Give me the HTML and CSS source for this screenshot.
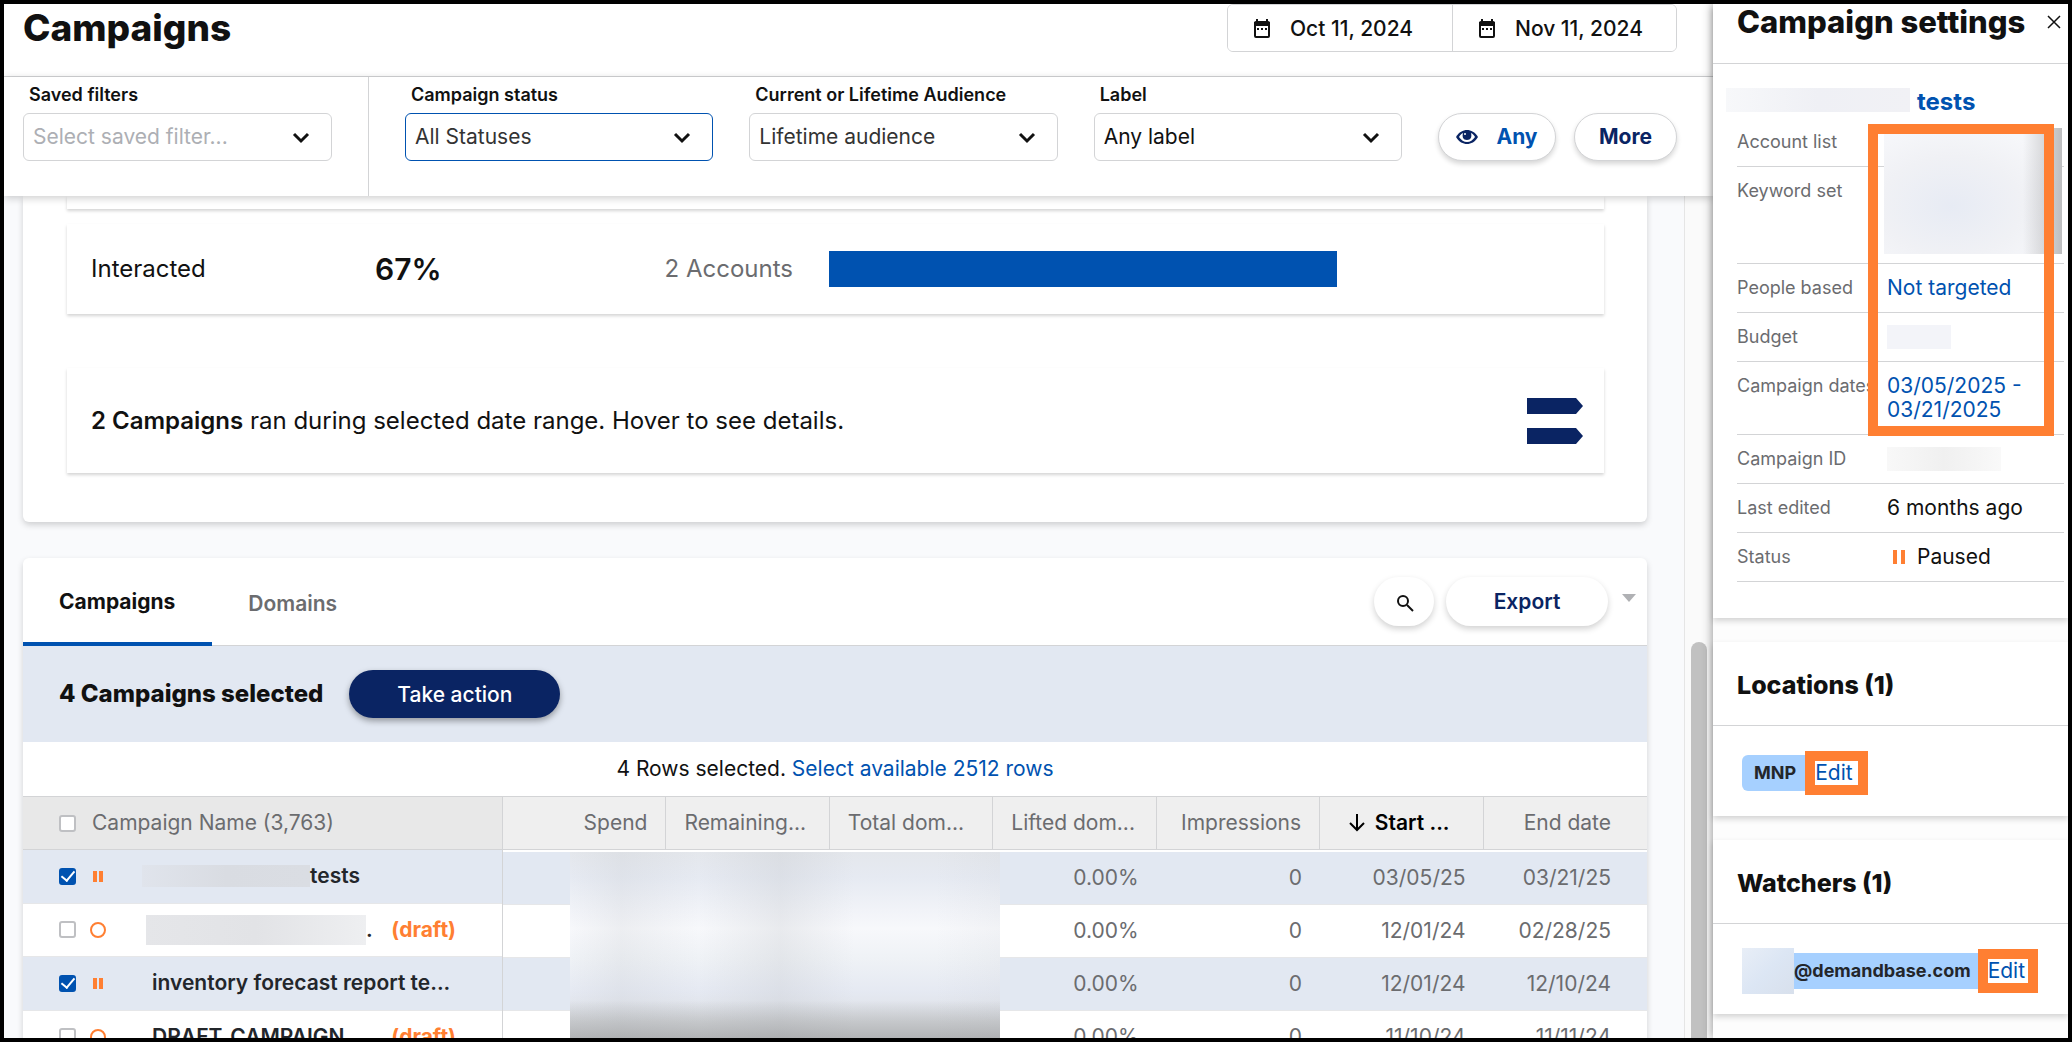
FILE: index.html
```html
<!DOCTYPE html>
<html lang="en">
<head>
    <meta charset="UTF-8">
    <meta name="viewport" content="width=device-width, initial-scale=1.0">
    <title>Campaigns</title>
    <link rel="stylesheet" href="styles.css">
</head>
<body>
    <main class="main">
        <header class="page-header">
            <h1>Campaigns</h1>
            <div class="date-range">
                <button class="date-button" type="button">
                    <svg class="calendar-icon" viewBox="0 0 18 20"><path d="M4 0v4M14 0v4" stroke="currentColor" stroke-width="2"/><rect x="2" y="3" width="14" height="15" rx="1" fill="none" stroke="currentColor" stroke-width="2"/><path d="M1 3h16v4H1z" fill="currentColor"/><path d="M4 10h2M8 10h2M12 10h2" stroke="currentColor" stroke-width="2"/></svg>
                    Oct 11, 2024
                </button>
                <button class="date-button" type="button">
                    <svg class="calendar-icon" viewBox="0 0 18 20"><path d="M4 0v4M14 0v4" stroke="currentColor" stroke-width="2"/><rect x="2" y="3" width="14" height="15" rx="1" fill="none" stroke="currentColor" stroke-width="2"/><path d="M1 3h16v4H1z" fill="currentColor"/><path d="M4 10h2M8 10h2M12 10h2" stroke="currentColor" stroke-width="2"/></svg>
                    Nov 11, 2024
                </button>
            </div>
        </header>

        <div class="filter-bar">
            <div class="saved-filters">
                <div class="field">
                    <label for="saved-filter">Saved filters</label>
                    <div class="select-box">
                        <select id="saved-filter" class="placeholder"><option>Select saved filter...</option></select>
                        <svg class="chevron" viewBox="0 0 18 12"><path d="M2 2l7 7 7-7"/></svg>
                    </div>
                </div>
            </div>
            <div class="filters">
                <div class="field">
                    <label for="status">Campaign status</label>
                    <div class="select-box">
                        <select id="status" class="active"><option>All Statuses</option></select>
                        <svg class="chevron" viewBox="0 0 18 12"><path d="M2 2l7 7 7-7"/></svg>
                    </div>
                </div>
                <div class="field">
                    <label for="audience">Current or Lifetime Audience</label>
                    <div class="select-box">
                        <select id="audience"><option>Lifetime audience</option></select>
                        <svg class="chevron" viewBox="0 0 18 12"><path d="M2 2l7 7 7-7"/></svg>
                    </div>
                </div>
                <div class="field">
                    <label for="label">Label</label>
                    <div class="select-box">
                        <select id="label" class="dark"><option>Any label</option></select>
                        <svg class="chevron" viewBox="0 0 18 12"><path d="M2 2l7 7 7-7"/></svg>
                    </div>
                </div>
                <div class="filter-buttons">
                    <button class="pill any" type="button">
                        <svg class="eye-icon" viewBox="0 0 22 14"><path d="M0 7C3 2 7 0 11 0s8 2 11 7c-3 5-7 7-11 7S3 12 0 7z" fill="#0a2463"/><path d="M3 7c1-2 2-3 4-4-1 4 0 7 4 7s5-3 4-7c2 1 3 2 4 4-2 3-5 5-8 5S5 10 3 7z" fill="#fff"/><circle cx="9" cy="4" r="1" fill="#fff"/></svg>
                        Any
                    </button>
                    <button class="pill more" type="button">More</button>
                </div>
            </div>
        </div>

        <div class="content">
            <div class="cards">
                <section class="card funnel">
                    <div class="funnel-row previous"></div>
                    <div class="funnel-row">
                        <span class="stage">Interacted</span>
                        <strong class="percent">67%</strong>
                        <span class="accounts">2 Accounts</span>
                        <div class="bar-track"><div class="bar" style="width: 66.7%"></div></div>
                    </div>
                    <div class="funnel-row summary">
                        <p><strong>2 Campaigns</strong> ran during selected date range. Hover to see details.</p>
                        <svg class="flags" viewBox="0 0 56 46"><path d="M0 0h49l7 8-7 8H0zM0 30h49l7 8-7 8H0z"/></svg>
                    </div>
                </section>

                <section class="card campaigns">
                    <div class="tabs">
                        <button class="tab selected" type="button">Campaigns</button>
                        <button class="tab" type="button">Domains</button>
                        <div class="tools">
                            <button class="round search" type="button" aria-label="Search">
                                <svg viewBox="0 0 18 18"><circle cx="7" cy="7" r="5"/><path d="M11 11l6 6"/></svg>
                            </button>
                            <button class="round export" type="button">Export</button>
                            <span class="caret"></span>
                        </div>
                    </div>
                    <div class="selection-bar">
                        <h2>4 Campaigns selected</h2>
                        <button class="take-action" type="button">Take action</button>
                    </div>
                    <p class="rows-selected">4 Rows selected. <a href="#">Select available 2512 rows</a></p>

                    <div class="grid">
                        <table class="names">
                            <thead>
                                <tr><th><div class="name-head"><input type="checkbox" id="all"><label for="all">Campaign Name (3,763)</label></div></th></tr>
                            </thead>
                            <tbody>
                                <tr class="checked">
                                    <td><div class="name-cell">
                                        <input type="checkbox" aria-label="Select tests" checked>
                                        <span class="status"><i class="pause"></i></span>
                                        <span class="name masked"><span class="mask mask-first"></span>tests</span>
                                    </div></td>
                                </tr>
                                <tr>
                                    <td><div class="name-cell">
                                        <input type="checkbox" aria-label="Select draft">
                                        <span class="status"><i class="ring"></i></span>
                                        <span class="name masked"><span class="mask mask-second"></span>.</span>
                                        <span class="draft">(draft)</span>
                                    </div></td>
                                </tr>
                                <tr class="checked">
                                    <td><div class="name-cell">
                                        <input type="checkbox" aria-label="Select inventory forecast report" checked>
                                        <span class="status"><i class="pause"></i></span>
                                        <span class="name">inventory forecast report te...</span>
                                    </div></td>
                                </tr>
                                <tr>
                                    <td><div class="name-cell">
                                        <input type="checkbox" aria-label="Select DRAFT_CAMPAIGN">
                                        <span class="status"><i class="ring"></i></span>
                                        <span class="name">DRAFT_CAMPAIGN</span>
                                        <span class="draft">(draft)</span>
                                    </div></td>
                                </tr>
                            </tbody>
                        </table>
                        <div class="metrics-pane">
                            <table class="metrics">
                                <thead>
                                    <tr>
                                        <th>Spend</th>
                                        <th class="left">Remaining...</th>
                                        <th class="left">Total dom...</th>
                                        <th class="left">Lifted dom...</th>
                                        <th>Impressions</th>
                                        <th class="sorted"><svg class="arrow" viewBox="0 0 16 18"><path d="M8 0v16M1 9l7 7 7-7"/></svg>Start ...</th>
                                        <th class="last">End date</th>
                                    </tr>
                                </thead>
                                <tbody>
                                    <tr class="checked"><td></td><td></td><td></td><td>0.00%</td><td>0</td><td>03/05/25</td><td class="last">03/21/25</td></tr>
                                    <tr><td></td><td></td><td></td><td>0.00%</td><td>0</td><td>12/01/24</td><td class="last">02/28/25</td></tr>
                                    <tr class="checked"><td></td><td></td><td></td><td>0.00%</td><td>0</td><td>12/01/24</td><td class="last">12/10/24</td></tr>
                                    <tr><td></td><td></td><td></td><td>0.00%</td><td>0</td><td>11/10/24</td><td class="last">11/11/24</td></tr>
                                </tbody>
                            </table>
                            <div class="metrics-mask"></div>
                        </div>
                    </div>
                </section>
            </div>
            <div class="scrollbar"><div class="thumb"></div></div>
        </div>
    </main>

    <aside class="panel">
        <section class="panel-section">
            <div class="panel-header">
                <h2>Campaign settings</h2>
                <button class="close" type="button" aria-label="Close"><svg viewBox="0 0 12 12"><path d="M0 0l12 12M12 0L0 12"/></svg></button>
            </div>
            <div class="campaign-title"><span class="mask mask-title"></span><a href="#">tests</a></div>
            <div class="settings-wrap">
                <dl class="settings">
                    <div><dt>Account list</dt><dd></dd></div>
                    <div class="tall"><dt>Keyword set</dt><dd></dd></div>
                    <div><dt>People based</dt><dd><a href="#">Not targeted</a></dd></div>
                    <div><dt>Budget</dt><dd><span class="mask mask-budget"></span></dd></div>
                    <div><dt>Campaign dates</dt><dd><a href="#">03/05/2025 - 03/21/2025</a></dd></div>
                    <div><dt>Campaign ID</dt><dd><span class="mask mask-id"></span></dd></div>
                    <div><dt>Last edited</dt><dd>6 months ago</dd></div>
                    <div><dt>Status</dt><dd class="paused"><i class="pause large"></i>Paused</dd></div>
                </dl>
                <div class="list-mask"></div>
                <div class="highlight-box"></div>
            </div>
        </section>
        <section class="panel-section">
            <h3>Locations (1)</h3>
            <div class="chips">
                <span class="chip">MNP</span>
                <a class="edit" href="#">Edit</a>
            </div>
        </section>
        <section class="panel-section">
            <h3>Watchers (1)</h3>
            <div class="chips">
                <span class="mask mask-watcher"></span>
                <span class="chip email">@demandbase.com</span>
                <a class="edit watcher-edit" href="#">Edit</a>
            </div>
        </section>
    </aside>
</body>
</html>
```

FILE: styles.css
```css
:root {
    --blue: #0052b0;
    --navy: #0a2463;
    --orange: #ff7f32;
    --text: #111111;
    --muted: #6b6c6f;
    --line: #d3d4d6;
    --selected: #e2e8f2;
}

* {
    margin: 0;
    padding: 0;
    box-sizing: border-box;
}

body {
    display: flex;
    height: 100vh;
    overflow: hidden;
    border: 4px solid #000;
    background: #fff;
    color: var(--text);
    font-family: Inter, "Liberation Sans", sans-serif;
    font-size: 21px;
    line-height: 24px;
}

button,
input,
select {
    font: inherit;
    color: inherit;
}

button {
    border: none;
    background: #fff;
    cursor: pointer;
}

a {
    color: var(--blue);
    text-decoration: none;
}

h1,
h2,
h3 {
    font-weight: 800;
}

.main {
    flex: 1;
    min-width: 0;
    display: flex;
    flex-direction: column;
}

/* header */
.page-header {
    display: flex;
    justify-content: space-between;
    padding: 0 36px 24px 19px;
    border-bottom: 1px solid var(--line);
}

h1 {
    font-size: 37px;
    line-height: 48px;
}

.date-range {
    display: flex;
    height: 48px;
    border: 1px solid var(--line);
    border-radius: 6px;
    overflow: hidden;
}

.date-button {
    display: flex;
    align-items: center;
    gap: 19px;
    width: 224px;
    padding: 2px 0 0 25px;
    font-weight: 500;
}

.date-button + .date-button {
    border-left: 1px solid var(--line);
}

.calendar-icon {
    width: 18px;
    height: 20px;
}

/* filters */
.filter-bar {
    display: flex;
    position: relative;
    z-index: 1;
    background: #fff;
    box-shadow: 0 2px 8px rgba(0, 0, 0, 0.2);
}

.saved-filters {
    width: 365px;
    padding: 8px 36px 35px 19px;
    border-right: 1px solid var(--line);
}

.filters {
    flex: 1;
    display: flex;
    align-items: flex-end;
    gap: 36px;
    padding: 8px 36px 35px;
}

.field {
    flex: 1;
}

.field label {
    display: block;
    margin-bottom: 8px;
    padding-left: 6px;
    font-size: 18px;
    line-height: 20px;
    font-weight: 600;
}

.select-box {
    position: relative;
}

.select-box select {
    display: block;
    width: 100%;
    height: 48px;
    padding: 0 9px;
    border: 1px solid var(--line);
    border-radius: 6px;
    background: #fff;
    color: #333;
    appearance: none;
}

.select-box select.placeholder {
    color: #adafb4;
}

.select-box select.active {
    border-color: var(--blue);
}

.select-box select.dark {
    color: var(--text);
}

.chevron {
    position: absolute;
    right: 22px;
    top: 19px;
    width: 18px;
    height: 12px;
    fill: none;
    stroke: var(--text);
    stroke-width: 3;
    pointer-events: none;
}

.filter-buttons {
    display: flex;
    gap: 18px;
}

.pill {
    display: flex;
    align-items: center;
    justify-content: center;
    height: 48px;
    border: 1px solid var(--line);
    border-radius: 24px;
    box-shadow: 0 3px 5px rgba(0, 0, 0, 0.16);
    font-weight: 700;
}

.any {
    width: 118px;
    gap: 18px;
    color: var(--blue);
}

.more {
    width: 103px;
    color: var(--navy);
}

.eye-icon {
    width: 22px;
    height: 14px;
}

/* content */
.content {
    flex: 1;
    min-height: 0;
    display: flex;
    background: #f9fafc;
}

.cards {
    flex: 1;
    min-width: 0;
    padding: 0 37px 0 19px;
    overflow: hidden;
}

.scrollbar {
    display: flex;
    flex-direction: column;
    justify-content: flex-end;
    width: 29px;
    padding-left: 6px;
    border-left: 1px solid #e5e5e5;
    background: #fafafa;
}

.thumb {
    width: 16px;
    height: 47%;
    border-radius: 8px 8px 0 0;
    background: #c1c1c1;
}

.card {
    border-radius: 6px;
    background: #fff;
    box-shadow: 0 3px 6px rgba(0, 0, 0, 0.17);
}

.funnel {
    padding: 0 43px 49px 44px;
    margin-bottom: 36px;
    border-radius: 0 0 6px 6px;
}

.funnel-row {
    display: flex;
    align-items: center;
    height: 90px;
    margin-bottom: 54px;
    padding: 0 13px 0 24px;
    box-shadow: 0 2px 3px rgba(0, 0, 0, 0.17);
    font-size: 24px;
}

.funnel-row.previous {
    height: 13px;
    margin-bottom: 15px;
}

.stage {
    width: 284px;
}

.percent {
    width: 200px;
    font-size: 30px;
    font-weight: 600;
}

.accounts {
    width: 218px;
    text-align: right;
    color: var(--muted);
}

.bar-track {
    flex: 1;
    margin-left: 36px;
}

.bar {
    height: 36px;
    background: var(--blue);
}

.summary {
    justify-content: space-between;
    height: 105px;
    margin-bottom: 0;
    padding-right: 21px;
}

.summary strong {
    font-weight: 600;
}

.flags {
    width: 56px;
    height: 46px;
    fill: var(--navy);
}

/* campaigns card */
.tabs {
    display: flex;
    height: 88px;
    border-bottom: 1px solid var(--line);
}

.tab {
    height: 88px;
    padding: 4px 37px 0 36px;
    background: none;
    color: var(--muted);
    font-weight: 600;
}

.tab.selected {
    border-bottom: 4px solid var(--blue);
    color: var(--text);
    font-weight: 700;
}

.tools {
    display: flex;
    gap: 12px;
    margin: 19px 11px 0 auto;
}

.round {
    height: 49px;
    border-radius: 25px;
    box-shadow: 0 3px 6px rgba(0, 0, 0, 0.18);
}

.search {
    width: 60px;
}

.search svg {
    width: 18px;
    height: 18px;
    margin-left: 2px;
    vertical-align: middle;
    fill: none;
    stroke: var(--text);
    stroke-width: 2;
}

.export {
    width: 162px;
    color: var(--navy);
    font-weight: 600;
}

.caret {
    height: 8px;
    margin: 17px 0 0 2px;
    border: 7px solid transparent;
    border-top: 8px solid #b0b1b4;
    border-bottom: none;
}

.selection-bar {
    display: flex;
    align-items: center;
    gap: 26px;
    height: 96px;
    padding-left: 36px;
    background: var(--selected);
}

.selection-bar h2 {
    font-size: 24px;
}

.take-action {
    width: 211px;
    height: 48px;
    padding-top: 1px;
    border-radius: 24px;
    background: var(--navy);
    box-shadow: 0 3px 6px rgba(0, 0, 0, 0.35);
    color: #fff;
    font-weight: 500;
}

.rows-selected {
    padding: 15px 0;
    text-align: center;
}

/* the name column stays put, the metric columns sit in their own pane */
.grid {
    display: flex;
    border-top: 1px solid var(--line);
    color: var(--muted);
}

table {
    border-collapse: separate;
    border-spacing: 0;
    table-layout: fixed;
}

th,
td {
    height: 53px;
    border-bottom: 1px solid var(--line);
    font-weight: 400;
}

td {
    border-color: #e6e7e9;
}

.checked td {
    background: var(--selected);
}

.names {
    width: 480px;
    flex: none;
    border-right: 1px solid var(--line);
}

.names th {
    background: #e8e8e8;
}

.name-head,
.name-cell {
    display: flex;
    align-items: center;
    padding-left: 36px;
}

.name-head label {
    margin-left: 16px;
}

input[type="checkbox"] {
    display: flex;
    align-items: center;
    justify-content: center;
    flex: none;
    width: 17px;
    height: 17px;
    border: 2px solid #bfc0c3;
    border-radius: 3px;
    background: #fff;
    appearance: none;
}

input[type="checkbox"]:checked {
    border-color: var(--blue);
    background: var(--blue);
}

input[type="checkbox"]:checked::after {
    content: "";
    width: 6px;
    height: 11px;
    margin-bottom: 3px;
    border: solid #fff;
    border-width: 0 2px 2px 0;
    transform: rotate(40deg);
}

.status {
    display: flex;
    justify-content: center;
    width: 16px;
    margin-left: 14px;
}

.pause {
    width: 10px;
    height: 11px;
    border: solid var(--orange);
    border-width: 0 4px;
}

.pause.large {
    width: 12px;
    height: 14px;
}

.ring {
    width: 16px;
    height: 16px;
    border: 2px solid var(--orange);
    border-radius: 50%;
}

.name {
    display: flex;
    align-items: center;
    margin-left: 46px;
    color: #23262b;
    font-weight: 600;
    white-space: nowrap;
}

.name.masked {
    margin-left: 36px;
}

.draft {
    margin: 0 46px 0 auto;
    color: var(--orange);
    font-weight: 700;
}

.mask {
    display: block;
    flex: none;
}

.mask-first {
    width: 168px;
    height: 22px;
    background: linear-gradient(90deg, #e0e4ec, #d9dce2 50%, #dadde3);
}

.mask-second {
    width: 220px;
    height: 30px;
    margin-left: 4px;
    background: linear-gradient(90deg, #e5e6e9, #e2e3e6 50%, #eeeff1);
}

.metrics-pane {
    flex: 1;
    position: relative;
    min-width: 0;
}

.metrics {
    width: 100%;
}

.metrics th,
.metrics td {
    padding-right: 18px;
    text-align: right;
    white-space: nowrap;
}

.metrics th {
    border-right: 1px solid var(--line);
    background: #efefef;
}

.metrics th.left {
    padding: 0 0 0 18px;
    text-align: left;
}

.metrics th.sorted {
    padding-right: 33px;
    color: #000;
    font-weight: 600;
}

.metrics th.last,
.metrics td.last {
    padding-right: 36px;
    border-right: none;
}

.metrics tbody::before {
    content: "";
    display: block;
    height: 2px;
}

.arrow {
    width: 16px;
    height: 18px;
    margin-right: 10px;
    vertical-align: -2px;
    fill: none;
    stroke: #000;
    stroke-width: 2;
}

.metrics-mask {
    position: absolute;
    left: 67px;
    top: 55px;
    bottom: 0;
    width: 430px;
    background:
        linear-gradient(180deg, transparent 70%, rgba(120, 120, 120, 0.45) 89%),
        linear-gradient(90deg, transparent, rgba(190, 193, 198, 0.18) 12%, transparent 30%, rgba(190, 193, 198, 0.25) 49%, transparent 66%, transparent 85%, rgba(190, 193, 198, 0.1)),
        linear-gradient(180deg, #e4e7ec, #e6eaf2 12%, #f7f8fb 36%, #eff2f6 50%, #e5e9f2 66%, #dde0e4 80%);
}

/* settings panel */
.panel {
    position: relative;
    z-index: 2;
    width: 355px;
    background: #fdfdfd;
    box-shadow: 0 0 10px rgba(0, 0, 0, 0.45);
}

.panel-section {
    margin-bottom: 24px;
    background: #fff;
    box-shadow: 0 3px 6px rgba(0, 0, 0, 0.17);
}

.panel-header {
    display: flex;
    align-items: center;
    justify-content: space-between;
    height: 60px;
    padding: 0 8px 24px 24px;
    border-bottom: 1px solid var(--line);
}

.panel-header h2 {
    font-size: 31px;
    line-height: 36px;
    white-space: nowrap;
}

.close {
    display: flex;
    background: none;
}

.close svg {
    width: 12px;
    height: 12px;
    overflow: visible;
    fill: none;
    stroke: var(--text);
    stroke-width: 1.5;
}

.campaign-title {
    display: flex;
    align-items: flex-start;
    gap: 7px;
    padding: 24px 0 3px 13px;
    font-size: 24px;
    line-height: 27px;
    font-weight: 700;
}

.mask-title {
    width: 184px;
    height: 24px;
    background: linear-gradient(90deg, #f7f8fa, #eff0f5 50%, #f1f1f5);
}

.settings-wrap {
    position: relative;
    padding: 0 4px 36px 24px;
}

.settings > div {
    display: flex;
    padding: 12px 0;
    border-bottom: 1px solid var(--line);
}

.settings > .tall {
    height: 97px;
}

dt {
    flex: none;
    width: 150px;
    color: var(--muted);
    font-size: 18px;
    white-space: nowrap;
}

dd {
    min-height: 24px;
}

.paused {
    display: flex;
    align-items: center;
    gap: 12px;
    padding-left: 6px;
}

.mask-budget {
    width: 64px;
    height: 24px;
    background: #f3f4f9;
}

.mask-id {
    width: 114px;
    height: 24px;
    background: linear-gradient(90deg, #f8f8f8, #f0f0f0 50%, #f9f9f9);
}

.list-mask {
    position: absolute;
    left: 171px;
    right: 6px;
    top: 10px;
    height: 126px;
    background:
        linear-gradient(90deg, transparent 78%, rgba(120, 120, 120, 0.45)),
        radial-gradient(ellipse at 38% 62%, #e7ebf4, #f0f1f5 45%, #f6f7fa 75%);
}

.highlight-box {
    position: absolute;
    left: 155px;
    right: 14px;
    top: 6px;
    height: 312px;
    border: 10px solid var(--orange);
    pointer-events: none;
}

h3 {
    padding: 31px 24px 28px;
    border-bottom: 1px solid var(--line);
    font-size: 25px;
}

.chips {
    display: flex;
    align-items: center;
    height: 90px;
    padding: 3px 29px 0;
}

.chip {
    padding: 6px 9px 6px 12px;
    border-radius: 6px 0 0 6px;
    background: #a6d0ff;
    color: #23262b;
    font-size: 18px;
    font-weight: 700;
}

.chip.email {
    padding: 6px 7px 6px 0;
    border-radius: 0;
}

.edit {
    padding-right: 5px;
    border: 10px solid var(--orange);
}

.watcher-edit {
    padding-right: 3px;
}

.mask-watcher {
    width: 52px;
    height: 46px;
    background: linear-gradient(135deg, #e8eef7, #dce6f4 50%, #d8e0ec);
}
```
